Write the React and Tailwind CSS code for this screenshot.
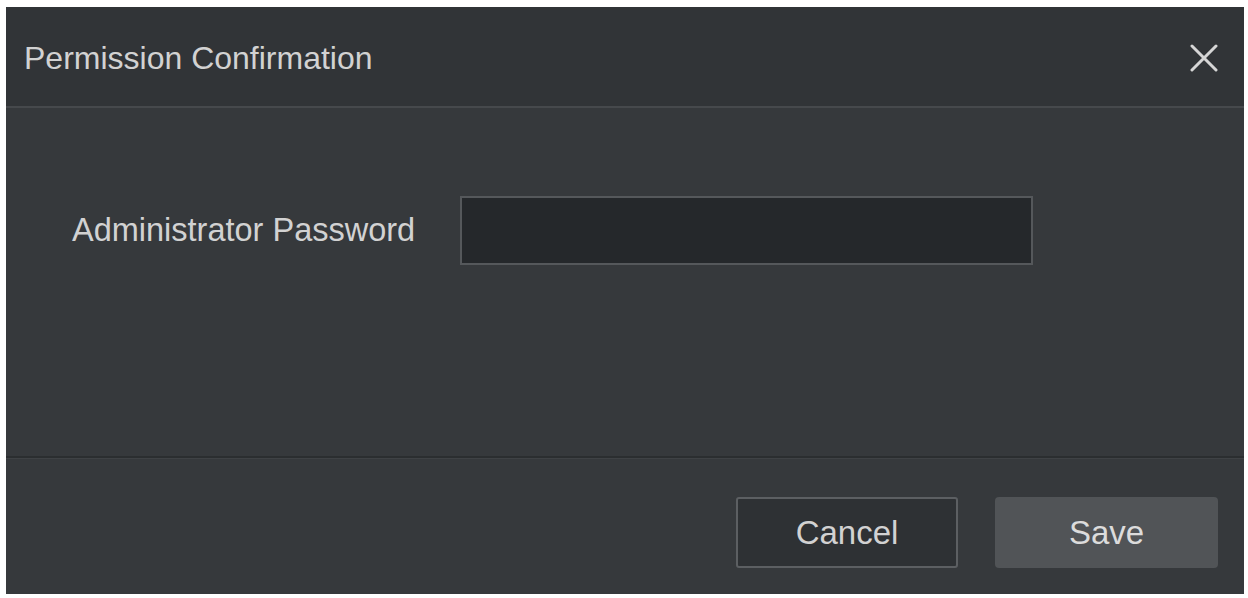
import { useState } from "react";

const font = { fontFamily: '"Liberation Sans", Arial, sans-serif' };

const CloseIcon = () => (
  <svg width="28" height="28" viewBox="0 0 28 28" fill="none">
    <path
      d="M2 2L26 26M26 2L2 26"
      stroke="#d6d6d6"
      strokeWidth="3"
      strokeLinecap="round"
    />
  </svg>
);

export default function App() {
  const [password, setPassword] = useState("");

  return (
    <div
      className="w-[1248px] h-[598px] bg-white pt-[7px] pl-[6px] pr-[4px] pb-[4px]"
      style={font}
    >
      <div className="flex flex-col h-[587px] bg-[#36393c] text-[#d2d2d2]">
        {/* Header */}
        <div className="flex items-center justify-between h-[101px] pt-[2px] pl-[18px] pr-[26px] bg-[#313437] border-b-2 border-[#46494c]">
          <h2 className="text-[32px] leading-none">
            Permission Confirmation
          </h2>
          <button className="flex items-center justify-center">
            <CloseIcon />
          </button>
        </div>

        {/* Body */}
        <div className="flex-1 flex items-start pt-[88px] pl-[66px]">
          <div className="flex items-center h-[69px]">
            <label className="w-[388px] text-[32.5px] leading-none">
              Administrator Password
            </label>
            <input
              type="password"
              value={password}
              onChange={(e) => setPassword(e.target.value)}
              className="w-[573px] h-[69px] bg-[#25282b] border-2 border-[#55585b] outline-none px-4 text-[28px] text-[#d2d2d2]"
            />
          </div>
        </div>

        {/* Footer */}
        <div className="h-[138px] flex items-start justify-end gap-[37px] pt-[39px] pr-[26px] border-t-2 border-t-[#2b2e30] shadow-[inset_0_1px_0_#3f4245]">
          <button className="w-[222px] h-[71px] rounded-[3px] border-2 border-[#5c5f62] bg-[#2e3134] text-[33px] text-[#d2d2d2]">
            Cancel
          </button>
          <button className="w-[223px] h-[71px] rounded-[4px] bg-[#515457] text-[33px] text-[#dcdcdc]">
            Save
          </button>
        </div>
      </div>
    </div>
  );
}
